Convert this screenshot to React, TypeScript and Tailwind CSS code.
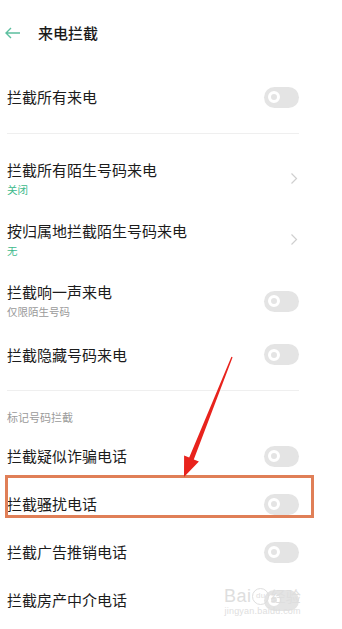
import React from "react";

const font = { fontFamily: '"Noto Sans CJK SC", "Noto Sans", sans-serif' };

const Toggle = () => (
  <div className="w-[35px] h-[21px] rounded-full bg-[#e4e4e4] flex items-center pl-[4px]">
    <div className="w-[12px] h-[12px] rounded-full border-[3px] border-white bg-[#e4e4e4]" />
  </div>
);

const Chevron = () => (
  <svg width="8" height="13" viewBox="0 0 8 13" className="mr-[1px]">
    <path d="M1.5 1.5 L6.5 6.5 L1.5 11.5" fill="none" stroke="#cfcfcf" strokeWidth="1.2" />
  </svg>
);

interface RowProps {
  title: string;
  sub?: string;
  subColor?: string;
  right: "toggle" | "chevron";
  height: string;
}

const Row: React.FC<RowProps> = ({ title, sub, subColor, right, height }) => (
  <div className={`flex items-center justify-between ${height}`}>
    <div className="flex flex-col">
      <span className="text-[15px] leading-[18px] text-[#1c1c1c]">{title}</span>
      {sub && (
        <span className={`text-[10.5px] leading-[14px] mt-[4px] ${subColor}`}>{sub}</span>
      )}
    </div>
    {right === "toggle" ? <Toggle /> : <Chevron />}
  </div>
);

export default function App() {
  return (
    <div className="relative w-[342px] h-[629px] bg-white overflow-hidden" style={font}>
      {/* header */}
      <div className="h-[66px] flex items-center pl-[5px]">
        <svg width="16" height="12" viewBox="0 0 16 12">
          <path d="M1 6 H15 M6 1 L1 6 L6 11" fill="none" stroke="#5cbf9f" strokeWidth="1.4" />
        </svg>
        <span className="ml-[17px] text-[15px] font-medium text-[#1a1a1a]">来电拦截</span>
      </div>

      <div className="pl-[7px] pr-[43px]">
        <Row title="拦截所有来电" right="toggle" height="h-[62px]" />
        <div className="mt-[5px] h-px bg-[#efefef]" />

        <div className="pt-[14px]">
          <Row title="拦截所有陌生号码来电" sub="关闭" subColor="text-[#3dba8c]" right="chevron" height="h-[61px]" />
          <Row title="按归属地拦截陌生号码来电" sub="无" subColor="text-[#3dba8c]" right="chevron" height="h-[61px]" />
          <Row title="拦截响一声来电" sub="仅限陌生号码" subColor="text-[#9a9a9a]" right="toggle" height="h-[62px]" />
          <Row title="拦截隐藏号码来电" right="toggle" height="h-[45px]" />
        </div>
        <div className="mt-[13px] h-px bg-[#efefef]" />

        <div className="pt-[18px] text-[11px] leading-[16px] text-[#9a9a9a]">标记号码拦截</div>
        <div className="mt-[7px]">
          <Row title="拦截疑似诈骗电话" right="toggle" height="h-[48px]" />
          <div className="relative">
            <Row title="拦截骚扰电话" right="toggle" height="h-[48px]" />
            <div className="absolute left-[-2px] top-[-5px] w-[309px] h-[43px] border-[3px] border-[#e07f57]" />
          </div>
          <Row title="拦截广告推销电话" right="toggle" height="h-[48px]" />
          <Row title="拦截房产中介电话" right="toggle" height="h-[48px]" />
        </div>
      </div>

      {/* red annotation arrow */}
      <svg className="absolute left-0 top-0" width="342" height="629" viewBox="0 0 342 629">
        <polygon
          points="231.4,356.8 232.6,357.3 193.8,459.4 198.9,461.5 184,477 184.1,455.5 189.2,457.6"
          fill="#e8231d"
        />
      </svg>

      {/* watermark */}
      <div className="absolute left-[224px] top-[586px] flex flex-col items-center text-[#dedede]">
        <div className="flex items-center text-[18px] leading-[20px] tracking-wide" style={{ fontFamily: '"Liberation Sans", sans-serif' }}>
          <span>Bai</span>
          <span className="mx-[1px] w-[17px] h-[17px] rounded-full border border-[#dedede] text-[8px] flex items-center justify-center">du</span>
          <span className="text-[15px]" style={font}>经验</span>
        </div>
        <div className="text-[9px] leading-[11px] tracking-wide" style={{ fontFamily: '"Liberation Sans", sans-serif' }}>
          jingyan.baidu.com
        </div>
      </div>
    </div>
  );
}
